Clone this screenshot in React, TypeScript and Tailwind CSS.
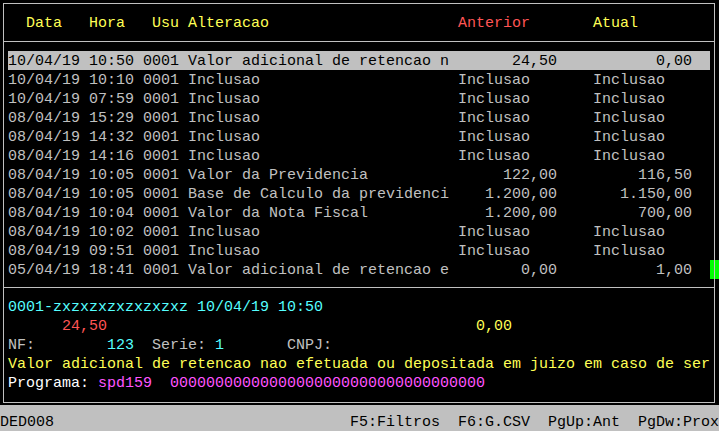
import React from 'react';

type Row = {
  data: string;
  hora: string;
  usu: string;
  desc: string;
  anterior: string;
  atual: string;
};

const rows: Row[] = [
  { data: '10/04/19', hora: '10:50', usu: '0001', desc: 'Valor adicional de retencao n', anterior: '24,50', atual: '0,00' },
  { data: '10/04/19', hora: '10:10', usu: '0001', desc: 'Inclusao', anterior: 'Inclusao', atual: 'Inclusao' },
  { data: '10/04/19', hora: '07:59', usu: '0001', desc: 'Inclusao', anterior: 'Inclusao', atual: 'Inclusao' },
  { data: '08/04/19', hora: '15:29', usu: '0001', desc: 'Inclusao', anterior: 'Inclusao', atual: 'Inclusao' },
  { data: '08/04/19', hora: '14:32', usu: '0001', desc: 'Inclusao', anterior: 'Inclusao', atual: 'Inclusao' },
  { data: '08/04/19', hora: '14:16', usu: '0001', desc: 'Inclusao', anterior: 'Inclusao', atual: 'Inclusao' },
  { data: '08/04/19', hora: '10:05', usu: '0001', desc: 'Valor da Previdencia', anterior: '122,00', atual: '116,50' },
  { data: '08/04/19', hora: '10:05', usu: '0001', desc: 'Base de Calculo da previdenci', anterior: '1.200,00', atual: '1.150,00' },
  { data: '08/04/19', hora: '10:04', usu: '0001', desc: 'Valor da Nota Fiscal', anterior: '1.200,00', atual: '700,00' },
  { data: '08/04/19', hora: '10:02', usu: '0001', desc: 'Inclusao', anterior: 'Inclusao', atual: 'Inclusao' },
  { data: '08/04/19', hora: '09:51', usu: '0001', desc: 'Inclusao', anterior: 'Inclusao', atual: 'Inclusao' },
  { data: '05/04/19', hora: '18:41', usu: '0001', desc: 'Valor adicional de retencao e', anterior: '0,00', atual: '1,00' },
];

// numbers are right aligned in the 11 col field, text is left aligned
function field(v: string) {
  return /^[\d.,]+$/.test(v) ? v.padStart(11) : v.padEnd(11);
}

function line(r: Row) {
  return `${r.data} ${r.hora} ${r.usu} ${r.desc.padEnd(29)} ${field(r.anterior)}    ${field(r.atual)}`;
}

// one terminal line: 19px cell, glyphs sit 1px lower than plain centering
function Line({ className = '', children }: { className?: string; children: React.ReactNode }) {
  return <div className={`h-[19px] leading-[21px] ${className}`}>{children}</div>;
}

export default function App() {
  return (
    <div className="w-[719px] h-[431px] bg-black overflow-hidden relative flex flex-col font-['Liberation_Mono',monospace] text-[15px] whitespace-pre">
      <div className="ml-[3px] mt-[3px] w-[712px] h-[400px] border border-[#c0c0c0] flex flex-col">
        {/* cabecalho */}
        <div className="pt-[9px] pb-[9px] pl-[4px] border-b border-[#c0c0c0]">
          <Line>
            <span className="text-[#ffff55]">{'  Data   Hora   Usu Alteracao                     '}</span>
            <span className="text-[#ff5555]">{'Anterior       '}</span>
            <span className="text-[#ffff55]">Atual</span>
          </Line>
        </div>

        {/* lista */}
        <div className="pt-[9px] pb-[8px] pl-[4px] border-b border-[#c0c0c0]">
          {rows.map((r, i) => (
            <Line
              key={i}
              className={i === 0 ? 'w-[702px] overflow-hidden bg-[#c0c0c0] text-black' : 'text-[#c0c0c0]'}
            >
              {line(r)}
            </Line>
          ))}
        </div>

        {/* detalhe */}
        <div className="pt-[9px] pl-[4px]">
          <Line className="text-[#55ffff]">0001-zxzxzxzxzxzxzxz 10/04/19 10:50</Line>
          <Line>
            <span className="text-[#ff5555]">{'      24,50'}</span>
            <span className="text-[#ffff55]">{'                                         0,00'}</span>
          </Line>
          <Line className="text-[#c0c0c0]">
            {'NF:        '}
            <span className="text-[#55ffff]">123</span>
            {'  Serie: '}
            <span className="text-[#55ffff]">1</span>
            {'       CNPJ:'}
          </Line>
          <Line className="text-[#ffff55]">
            Valor adicional de retencao nao efetuada ou depositada em juizo em caso de ser
          </Line>
          <Line>
            <span className="text-white">{'Programa: '}</span>
            <span className="text-[#ff55ff]">{'spd159  ' + '0'.repeat(35)}</span>
          </Line>
        </div>
      </div>

      {/* barra de rolagem */}
      <div className="absolute left-[710px] top-[260px] w-[9px] h-[19px] bg-[#00ff00]">
        <div className="ml-[4px] w-px h-full bg-[#c0c0c0]" />
      </div>

      {/* rodape */}
      <div className="mt-[2px] h-[26px] pt-[7px] bg-[#c0c0c0] text-black flex justify-between">
        <Line>DED008</Line>
        <Line>F5:Filtros  F6:G.CSV  PgUp:Ant  PgDw:Prox</Line>
      </div>
    </div>
  );
}
